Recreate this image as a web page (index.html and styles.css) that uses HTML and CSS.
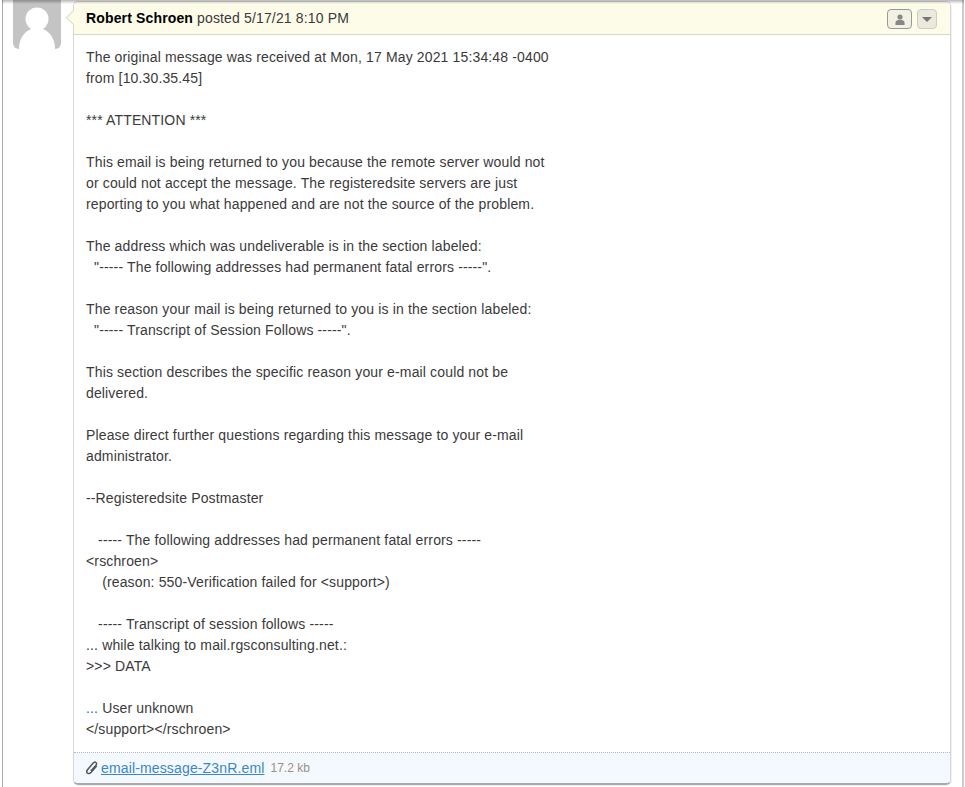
FILE: index.html
```html
<!DOCTYPE html>
<html lang="en">
<head>
    <meta charset="UTF-8">
    <meta name="viewport" content="width=device-width, initial-scale=1.0">
    <title>Message</title>
    <link rel="stylesheet" href="styles.css">
</head>
<body>
    <div class="thread">
        <div class="avatar">
            <svg width="48" height="49" viewBox="0 0 48 49">
                <circle cx="24" cy="19" r="11.5" fill="#fff"/>
                <path d="M6 49 C6 36 14 28 24 28 C34 28 42 36 42 49 Z" fill="#fff"/>
            </svg>
        </div>
        <div class="post">
            <span class="arrow"></span>
            <div class="post-head">
                <div class="byline"><strong>Robert Schroen</strong> posted 5/17/21 8:10 PM</div>
                <div class="actions">
                    <button class="btn btn-user" type="button">
                        <svg width="10" height="11" viewBox="0 0 10 11">
                            <circle cx="5" cy="3" r="2.6" fill="#888"/>
                            <path d="M0.5 11 V8.5 C0.5 7 2 6 3.5 6 H6.5 C8 6 9.5 7 9.5 8.5 V11 Z" fill="#888"/>
                        </svg>
                    </button>
                    <button class="btn btn-menu" type="button"><span class="caret"></span></button>
                </div>
            </div>
            <div class="post-body">
                <p>The original message was received at Mon, 17 May 2021 15:34:48 -0400<br>from [10.30.35.45]</p>
                <p>*** ATTENTION ***</p>
                <p>This email is being returned to you because the remote server would not<br>or could not accept the message. The registeredsite servers are just<br>reporting to you what happened and are not the source of the problem.</p>
                <p>The address which was undeliverable is in the section labeled:<br>&nbsp; "----- The following addresses had permanent fatal errors -----".</p>
                <p>The reason your mail is being returned to you is in the section labeled:<br>&nbsp; "----- Transcript of Session Follows -----".</p>
                <p>This section describes the specific reason your e-mail could not be<br>delivered.</p>
                <p>Please direct further questions regarding this message to your e-mail<br>administrator.</p>
                <p>--Registeredsite Postmaster</p>
                <p>&nbsp; &nbsp;----- The following addresses had permanent fatal errors -----<br>&lt;rschroen&gt;<br>&nbsp; &nbsp; (reason: 550-Verification failed for &lt;support&gt;)</p>
                <p>&nbsp; &nbsp;----- Transcript of session follows -----<br>... while talking to mail.rgsconsulting.net.:<br>&gt;&gt;&gt; DATA</p>
                <p><span class="dots">...</span> User unknown<br>&lt;/support&gt;&lt;/rschroen&gt;</p>
            </div>
            <div class="post-files">
                <svg class="clip" width="12" height="14" viewBox="0 0 12 14">
                    <path d="M10.8 4.8 L5.2 11.2 C4 12.6 2.2 12.9 1.3 12 C0.4 11.1 0.7 9.7 1.7 8.5 L7 2.2 C7.9 1.1 9.2 0.8 10 1.5 C10.9 2.2 10.7 3.4 9.8 4.4 L4.8 10" fill="none" stroke="#555" stroke-width="1.5"/>
                </svg>
                <a class="file-link" href="#">email-message-Z3nR.eml</a>
                <span class="file-size">17.2 kb</span>
            </div>
        </div>
        <div class="top-shade"></div>
    </div>
</body>
</html>
```

FILE: styles.css
```css
html, body {
    height: 100%;
}

body {
    margin: 0;
    background: #fff;
    font-family: "Liberation Sans", Arial, sans-serif;
    font-size: 14px;
    line-height: 21px;
    letter-spacing: 0.145px;
    color: #3a3a3a;
    overflow: hidden;
}

.thread {
    position: relative;
    display: flex;
    align-items: flex-start;
    gap: 12px;
    width: 949px;
    height: 787px;
    margin-left: 2px;
    padding-left: 10px;
    border-left: 1px solid #aaa;
    border-right: 2px solid #ccc;
}

/* shadow of the bar above, falls over everything */
.top-shade {
    position: absolute;
    left: -1px;
    right: -2px;
    top: 0;
    height: 4px;
    background: linear-gradient(rgba(0, 0, 0, 0.28), rgba(0, 0, 0, 0));
}

.avatar {
    flex: none;
    width: 48px;
    height: 49px;
    background: #c4c4c4;
    border-radius: 0 0 6px 6px;
    overflow: hidden;
}

.avatar svg {
    display: block;
}

.post {
    position: relative;
    flex: none;
    width: 876px;
    margin-top: 1px;
    background: #fff;
    border: 1px solid #d8d8d8;
    border-bottom: 2px solid #aaa;
    border-radius: 5px;
    box-shadow: 1px 1px 0 rgba(0, 0, 0, 0.06);
}

.arrow {
    position: absolute;
    left: -6px;
    top: 10px;
    width: 10px;
    height: 10px;
    background: #fcfce9;
    border-left: 1px solid #dcdcc4;
    border-bottom: 1px solid #dcdcc4;
    transform: rotate(45deg);
}

.post-head {
    position: relative;
    display: flex;
    justify-content: space-between;
    align-items: center;
    height: 32px;
    padding: 0 13px 0 12px;
    background: #fcfce9;
    border-bottom: 1px solid #d9d9c3;
    border-radius: 5px 5px 0 0;
}

.byline strong {
    color: #000;
}

.actions {
    display: flex;
    gap: 5px;
    margin-top: 2px;
}

.btn {
    display: flex;
    align-items: center;
    justify-content: center;
    height: 20px;
    padding: 0;
    border-radius: 4px;
    background: #f1f1e4;
}

.btn-user {
    width: 25px;
    border: 1px solid #999;
}

.btn-menu {
    width: 20px;
    border: 1px solid #ccc;
    background: #e9e9dc;
}

.caret {
    width: 0;
    height: 0;
    border-left: 5px solid transparent;
    border-right: 5px solid transparent;
    border-top: 5px solid #777;
}

.post-body {
    padding: 12px 12px 5px;
}

.post-body p {
    margin: 0 0 21px;
}

.post-body p:last-child {
    margin-bottom: 0;
}

.dots {
    color: #2a6ebb;
}

.post-files {
    display: flex;
    align-items: center;
    height: 30px;
    padding-left: 12px;
    margin-top: 7px;
    background: #f4f9ff;
    border-top: 1px dotted #bbb;
    border-radius: 0 0 5px 5px;
}

.clip {
    margin-right: 3px;
}

.file-link {
    color: #3a87c8;
    text-decoration: underline;
}

.file-size {
    margin-left: 6px;
    font-size: 12px;
    letter-spacing: 0;
    color: #9c9080;
}
```
